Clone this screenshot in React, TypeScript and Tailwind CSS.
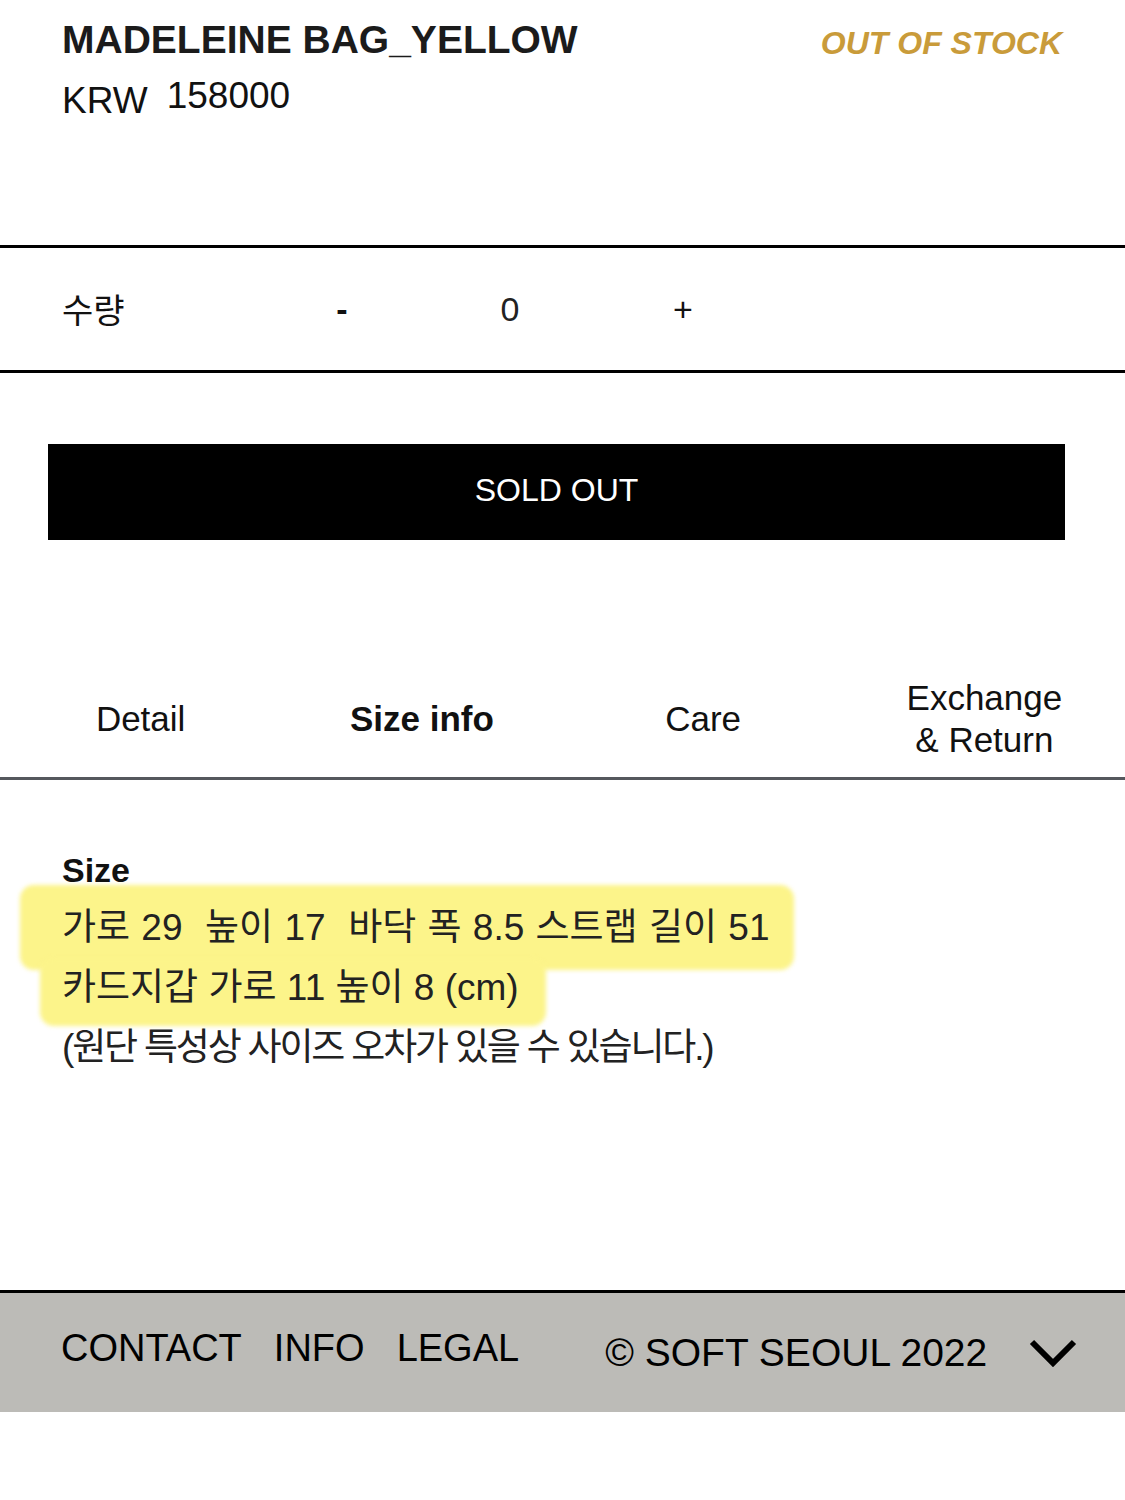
const latin = "font-['Liberation_Sans','Noto_Sans_CJK_KR',sans-serif]";

function Highlight({ className }: { className: string }) {
  return <span aria-hidden className={`absolute -z-10 rounded-[14px] bg-[#fcf48a] blur-[2px] ${className}`} />;
}

export default function App() {
  const tabs = ['Detail', 'Size info', 'Care', 'Exchange\n& Return'];

  return (
    <div className={`${latin} min-h-[1500px] w-[1125px] bg-white text-[#111]`}>
      {/* product header */}
      <div className="flex h-[245px] items-start justify-between pl-[62px] pr-[63px] pt-[17px]">
        <div>
          <h1 className="text-[39px] font-bold leading-[45px] text-[#1b1b1b]">MADELEINE BAG_YELLOW</h1>
          <div className="mt-[16px] flex items-start text-[37px] leading-[45px]">
            <span>KRW</span>
            <span className="ml-[19px] -mt-[5px]">158000</span>
          </div>
        </div>
        <div className="pt-[6px] text-[32px] font-bold italic leading-[40px] text-[#c99b3a]">OUT OF STOCK</div>
      </div>

      {/* quantity */}
      <div className="flex h-[128px] items-center border-y-[3px] border-black pl-[62px] text-[34px]">
        <span className="w-[250px] font-['Noto_Sans_CJK_KR',sans-serif] leading-[40px]">수량</span>
        <span className="w-[60px] text-center font-bold">-</span>
        <span className="w-[276px] text-center text-[#222]">0</span>
        <span className="w-[70px] text-center">+</span>
      </div>

      {/* sold out */}
      <div className="ml-[48px] mr-[60px] mt-[71px] flex h-[96px] items-center justify-center bg-black pb-[4px] text-[32px] text-white">
        SOLD OUT
      </div>

      {/* tabs */}
      <div className="mt-[120px] grid h-[120px] grid-cols-4 items-center border-b-[3px] border-[#55585d] text-[35px] leading-[42px]">
        {tabs.map((t) => (
          <div key={t} className={`whitespace-pre-line text-center ${t === 'Size info' ? 'font-bold' : ''}`}>
            {t}
          </div>
        ))}
      </div>

      {/* size info */}
      <div className="isolate mt-[70px] pl-[62px] text-[37px] text-[#222]">
        <div className="text-[34px] font-bold leading-[40px] text-[#111]">Size</div>
        <div className="mt-[8px] leading-[60px]">
          <div>
            <span className="relative inline-block whitespace-pre [word-spacing:1px]">
              <Highlight className="-left-[42px] -right-[25px] -top-[13px] -bottom-[12px]" />
              {'가로 29  높이 17  바닥 폭 8.5 스트랩 길이 51'}
            </span>
          </div>
          <div>
            <span className="relative inline-block">
              <Highlight className="-left-[22px] -right-[27px] top-0 -bottom-[8px]" />
              카드지갑 가로 11 높이 8 (cm)
            </span>
          </div>
          <div className="tracking-[-0.059em]">(원단 특성상 사이즈 오차가 있을 수 있습니다.)</div>
        </div>
      </div>

      {/* footer */}
      <div className="mt-[212px] flex h-[122px] items-center border-t-[3px] border-black bg-[#bcbbb7] pl-[61px] text-[38px] text-black">
        <div className="mb-[8px] flex gap-[32px]">
          <span>CONTACT</span>
          <span>INFO</span>
          <span>LEGAL</span>
        </div>
        <span className="ml-[86px] mt-[2px] text-[39px]">© SOFT SEOUL 2022</span>
        <svg className="ml-[42px]" width="48" height="28" viewBox="0 0 48 28" fill="none">
          <polyline points="3,3 24,24 45,3" stroke="black" strokeWidth="6" strokeLinejoin="miter" />
        </svg>
      </div>
    </div>
  );
}
